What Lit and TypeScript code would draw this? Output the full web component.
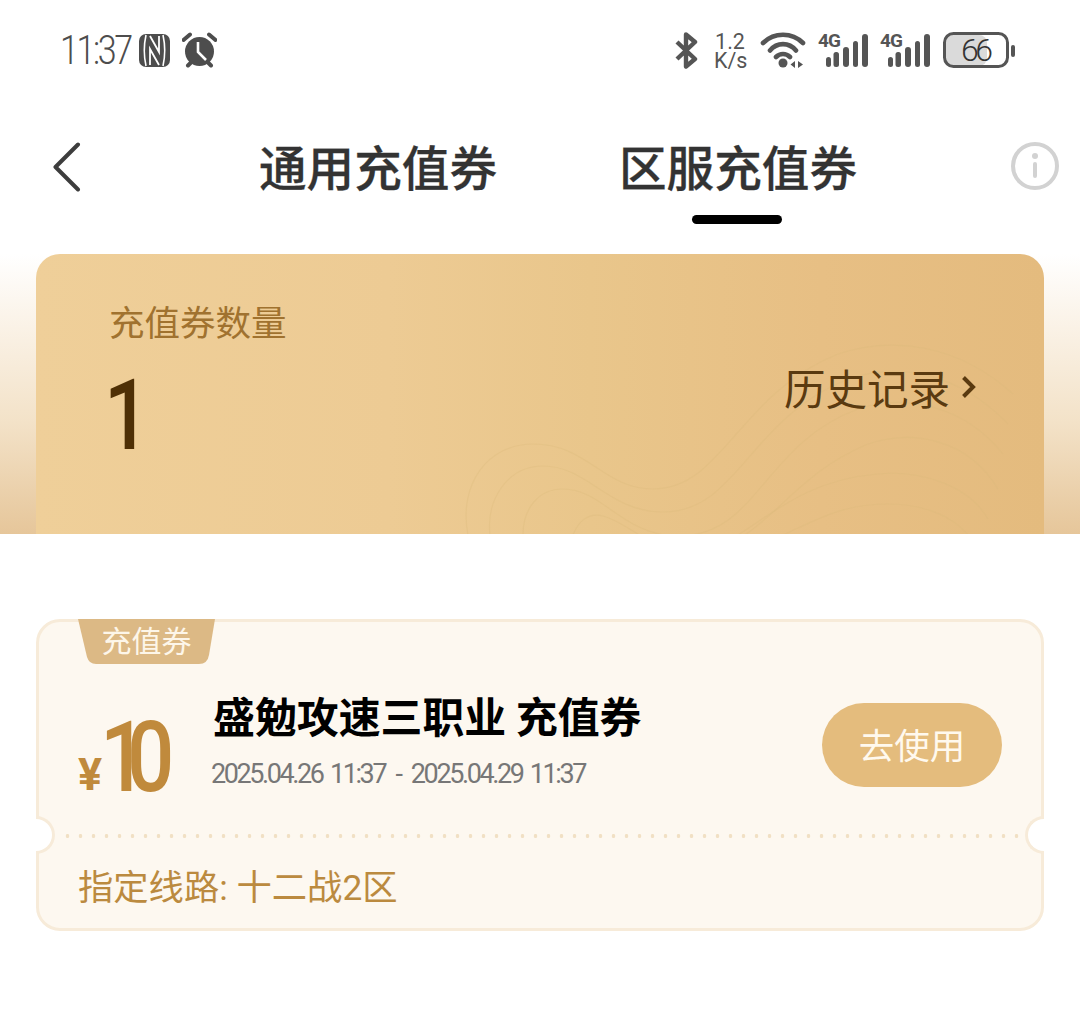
import { LitElement, html, css, svg } from "lit";
import { customElement } from "lit/decorators.js";

const wavePaths = [
  "M30 281 C20 230 50 190 95 190 C150 190 165 235 215 235 C285 235 300 140 400 100 C455 82 520 90 575 140",
  "M52 281 C48 245 70 212 105 212 C150 212 170 258 225 258 C300 258 310 165 410 125 C460 108 520 118 570 170",
  "M85 281 C85 255 100 235 125 235 C165 235 185 282 240 282 C320 282 325 190 420 155 C465 140 525 150 565 200",
  "M135 281 C140 268 150 258 165 262 C190 268 215 300 260 298 C330 290 345 225 430 190 C475 175 530 185 560 235",
  "M300 281 C340 255 375 225 440 220 C480 216 530 230 550 265",
  "M345 281 C380 265 405 250 450 250 C485 250 515 262 530 281",
];

@customElement("app-root")
export class AppRoot extends LitElement {
  static styles = css`
    :host {
      display: block;
      width: 1080px;
      height: 1036px;
      background: #fff;
      font-family: "Noto Sans CJK SC", Roboto, sans-serif;
      overflow: hidden;
    }
    svg { display: block; flex: none; }

    .status {
      height: 100px;
      box-sizing: border-box;
      display: flex;
      align-items: flex-start;
      padding: 32px 65px 0 60px;
      color: #4d4d4d;
    }
    .time {
      font: 300 40px/40px Roboto, sans-serif;
      letter-spacing: -2.8px;
      width: 79px;
      transform: scaleX(0.85);
      transform-origin: left center;
      white-space: nowrap;
      margin-top: -1px;
    }
    .nfc { margin-top: 2px; }
    .alarm { margin-left: 12px; }
    .spacer { flex: 1; }
    .speed {
      width: 32px;
      margin-left: 16px;
      font: 400 21.5px/19px Roboto, sans-serif;
      text-align: center;
      color: #555;
    }
    .wifi { margin-left: 14px; }
    .net { position: relative; width: 50px; height: 36px; margin-left: 12px; }
    .net span {
      position: absolute;
      left: 0;
      top: 1px;
      font: 700 19px/15px Roboto, sans-serif;
      letter-spacing: -0.8px;
      color: #555;
    }
    .batt {
      position: relative;
      width: 72px;
      height: 36px;
      margin-left: 13px;
    }
    .batt span {
      position: absolute;
      left: 18px;
      top: -1px;
      font: 300 32px/38px Roboto, sans-serif;
      letter-spacing: -3.4px;
      color: #333;
    }

    .nav {
      height: 154px;
      box-sizing: border-box;
      display: flex;
      align-items: flex-start;
      padding: 42px 21px 0 52px;
      color: #333;
    }
    .tabs {
      display: flex;
      gap: 122px;
      margin-left: 177px;
    }
    .tab {
      position: relative;
      font-size: 47.6px;
      font-weight: 500;
      line-height: 54px;
      width: 238px;
      white-space: nowrap;
      margin-top: -3px;
      -webkit-text-stroke: 0.3px #333;
    }
    .tab.active::after {
      content: "";
      position: absolute;
      left: 73px;
      top: 76px;
      width: 90px;
      height: 9px;
      border-radius: 5px;
      background: #000;
    }
    .info { margin-left: auto; }

    .hero {
      height: 280px;
      padding: 0 36px;
      box-sizing: border-box;
      background: linear-gradient(180deg, #ffffff 0%, #fbf4ea 22%, #f3e2c8 60%, #e6c69a 100%);
    }
    .hero-card {
      position: relative;
      height: 280px;
      box-sizing: border-box;
      border-radius: 24px 24px 0 0;
      background: linear-gradient(90deg, #efcf99 0%, #edcb94 35%, #e9c68b 55%, #e7bf84 78%, #e4bb7e 100%);
      overflow: hidden;
      padding: 44px 68px 0 73px;
      display: flex;
      justify-content: space-between;
    }
    .waves { position: absolute; left: 402px; top: 0; }
    .count { position: relative; }
    .count-label {
      font-size: 35.5px;
      line-height: 46px;
      color: #a0722f;
    }
    .count-num {
      font: 500 98px/100px Roboto, Arial, sans-serif;
      color: #4f3005;
      margin-top: 22px;
      margin-left: -5px;
      transform: scaleX(0.82);
      transform-origin: left center;
    }
    .history {
      position: relative;
      display: flex;
      align-items: center;
      gap: 11px;
      height: 56px;
      margin-top: 61px;
      font-size: 41.5px;
      color: #5a3a10;
    }

    .ticket {
      position: relative;
      margin: 85px 36px 0;
      height: 312px;
      box-sizing: border-box;
      border: 3px solid #f7ebd9;
      border-radius: 24px;
      background: #fdf8f0;
    }
    .tag {
      position: absolute;
      left: 39px;
      top: -3px;
      width: 137px;
      height: 45px;
      display: flex;
      justify-content: center;
      color: #fdf6e9;
      font-size: 30px;
      line-height: 41px;
    }
    .tag svg { position: absolute; left: 0; top: 0; }
    .tag span { position: relative; }
    .main {
      height: 212px;
      box-sizing: border-box;
      display: flex;
      align-items: flex-start;
      padding: 0 39px;
    }
    .price {
      display: flex;
      align-items: flex-end;
      width: 133px;
      margin-top: 88px;
      color: #c08a3c;
      flex: none;
    }
    .yen {
      font: 700 45px/45px Roboto, sans-serif;
      width: 27px;
      margin-bottom: 9px;
      flex: none;
    }
    .amount {
      font: 500 98px/96px Roboto, Arial, sans-serif;
      letter-spacing: -24px;
      transform: scaleX(0.85);
      transform-origin: left center;
      margin-left: -5px;
      white-space: nowrap;
    }
    .detail { margin-left: 2px; margin-top: 63px; flex: none; }
    .name {
      font-size: 41.9px;
      line-height: 60px;
      font-weight: 700;
      color: #000;
      white-space: nowrap;
    }
    .dates {
      margin-top: 11px;
      margin-left: -2px;
      font: 400 27px/36px Roboto, sans-serif;
      letter-spacing: -2.4px;
      word-spacing: 3px;
      color: #777;
      white-space: nowrap;
    }
    .dash { margin: 0 3px; }
    .use {
      margin-left: auto;
      margin-top: 81px;
      width: 180px;
      height: 84px;
      box-sizing: border-box;
      padding-bottom: 3px;
      border-radius: 42px;
      background: #e4bc7d;
      color: #fff9ee;
      font-size: 35.5px;
      display: flex;
      align-items: center;
      justify-content: center;
      flex: none;
    }
    .dots {
      height: 4px;
      margin: 0 22px;
      background-image: radial-gradient(circle, #f1e0c4 1.7px, transparent 2.1px);
      background-size: 13px 4px;
      background-repeat: repeat-x;
    }
    .notch {
      position: absolute;
      top: 194px;
      width: 19px;
      height: 38px;
      box-sizing: border-box;
      background: #fff;
      border: 3px solid #f7ebd9;
    }
    .notch.l { left: -3px; border-left: 0; border-radius: 0 19px 19px 0; }
    .notch.r { right: -3px; border-right: 0; border-radius: 19px 0 0 19px; }
    .line {
      padding: 25px 39px 0;
      font-family: Roboto, "Noto Sans CJK SC", sans-serif;
      font-size: 35.3px;
      line-height: 50px;
      color: #bb8a3f;
      white-space: nowrap;
    }
  `;

  render() {
    return html`
      <div class="status">
        <div class="time">11:37</div>
        <svg class="nfc" width="31" height="33" viewBox="0 0 31 33">
          <rect width="31" height="33" rx="7" fill="#4d4d4d" />
          <path d="M7 1 C5 10 5 23 7 32 M24 1 C26 10 26 23 24 32" fill="none" stroke="#fff" stroke-width="1.6" />
          <path d="M11 31 V15 L20 31 M20 2 V18 L11 2" fill="none" stroke="#fff" stroke-width="1.8" />
        </svg>
        <svg class="alarm" width="35" height="36" viewBox="0 0 35 36">
          <circle cx="17.5" cy="19.5" r="14.5" fill="#4d4d4d" />
          <path d="M16 10 V20 L24 28" fill="none" stroke="#fff" stroke-width="2.6" />
          <path d="M1.5 8 L8 2.5 M33.5 8 L27 2.5 M6 33.5 L9 30.5 M29 33.5 L26 30.5" stroke="#4d4d4d" stroke-width="4" stroke-linecap="round" />
        </svg>
        <div class="spacer"></div>
        <svg width="24" height="37" viewBox="0 0 24 37">
          <path d="M3 10 L21 27 L12 34.5 V2.5 L21 10 L3 27" fill="none" stroke="#555" stroke-width="4.4" stroke-linejoin="round" />
        </svg>
        <div class="speed">1.2<br />K/s</div>
        <svg class="wifi" width="46" height="37" viewBox="0 0 46 37">
          <path d="M3 11 C14 0 32 0 43 11 M10 18.5 C17 10 29 10 36 18.5 M16 25 C20 21 26 21 30 25" fill="none" stroke="#555" stroke-width="4.6" stroke-linecap="round" />
          <circle cx="23" cy="31" r="4.5" fill="#555" />
          <path d="M35 29 L30.5 32.5 L35 36 Z M38 29 L43 32.5 L38 36 Z" fill="#555" />
        </svg>
        ${[0, 1].map(
          () => html`<div class="net">
            <span>4G</span>
            <svg width="50" height="36" viewBox="0 0 50 36">
              <g fill="#555">
                <rect x="8" y="25" width="5" height="10" rx="2.5" />
                <rect x="15.5" y="20" width="5.5" height="15" rx="2.5" />
                <rect x="25" y="15" width="6" height="20" rx="3" />
                <rect x="35" y="9" width="5" height="26" rx="2.5" />
                <rect x="44" y="2" width="6" height="33" rx="3" />
              </g>
            </svg>
          </div>`
        )}
        <div class="batt">
          <svg width="72" height="36" viewBox="0 0 72 36">
            <rect x="2" y="3" width="42" height="31" rx="8" fill="#dadada" />
            <rect x="1.5" y="1.5" width="63" height="33" rx="9" fill="none" stroke="#555" stroke-width="3" />
            <rect x="68" y="13" width="4" height="12" rx="2" fill="#555" />
          </svg>
          <span>66</span>
        </div>
      </div>

      <div class="nav">
        <svg width="30" height="50" viewBox="0 0 30 50">
          <path d="M26 2.5 L3.5 25 L26 47.5" fill="none" stroke="#3d3d3d" stroke-width="4" stroke-linecap="round" stroke-linejoin="round" />
        </svg>
        <div class="tabs">
          <div class="tab">通用充值券</div>
          <div class="tab active">区服充值券</div>
        </div>
        <svg class="info" width="48" height="48" viewBox="0 0 48 48">
          <circle cx="24" cy="24" r="22" fill="none" stroke="#d2d2d2" stroke-width="4" />
          <circle cx="24" cy="14" r="3" fill="#d2d2d2" />
          <rect x="22" y="20" width="4" height="16" rx="2" fill="#d2d2d2" />
        </svg>
      </div>

      <div class="hero">
        <div class="hero-card">
          <svg class="waves" width="606" height="280" viewBox="0 0 606 280">
            ${wavePaths.map(
              (d) => svg`<path d=${d} fill="none" stroke="#dcb87c" stroke-opacity="0.3" stroke-width="1.2" />`
            )}
          </svg>
          <div class="count">
            <div class="count-label">充值券数量</div>
            <div class="count-num">1</div>
          </div>
          <div class="history">
            <span>历史记录</span>
            <svg width="15" height="24" viewBox="0 0 15 24">
              <path d="M2.5 2.5 L12 12 L2.5 21.5" fill="none" stroke="#5a3a10" stroke-width="4" />
            </svg>
          </div>
        </div>
      </div>

      <div class="ticket">
        <div class="tag">
          <svg width="137" height="45" viewBox="0 0 137 45">
            <path d="M0 0 H137 L131 36 Q129.5 45 121 45 H18 Q11 45 9 38 Z" fill="#dcb985" />
          </svg>
          <span>充值券</span>
        </div>
        <div class="main">
          <div class="price">
            <div class="yen">¥</div>
            <div class="amount">10</div>
          </div>
          <div class="detail">
            <div class="name">盛勉攻速三职业 充值券</div>
            <div class="dates">2025.04.26 11:37 <span class="dash">-</span> 2025.04.29 11:37</div>
          </div>
          <div class="use">去使用</div>
        </div>
        <div class="dots"></div>
        <div class="notch l"></div>
        <div class="notch r"></div>
        <div class="line">指定线路: 十二战2区</div>
      </div>
    `;
  }
}
